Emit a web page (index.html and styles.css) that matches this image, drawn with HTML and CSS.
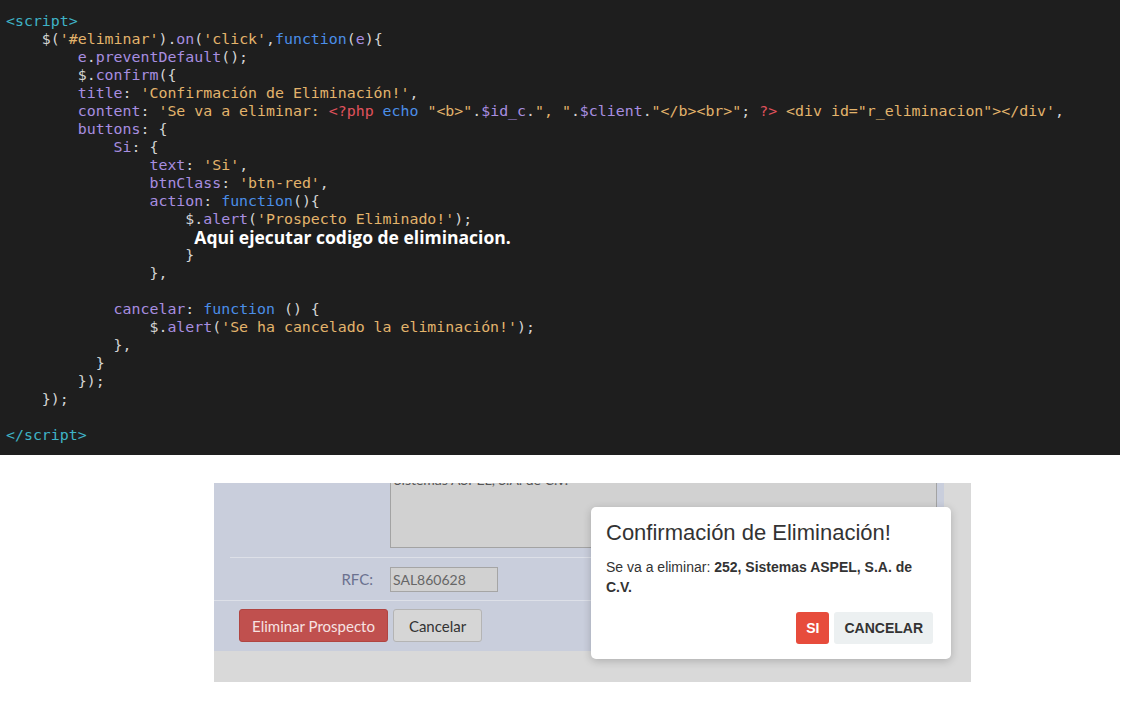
FILE: index.html
```html
<!DOCTYPE html>
<html lang="es">
<head>
  <meta charset="UTF-8">
  <title>Confirmar eliminación</title>
  <link rel="stylesheet" href="styles.css">
</head>
<body>
  <!-- Code snippet -->
  <div class="code">
<pre><span class="t">&lt;script&gt;</span>
    $(<span class="s">'#eliminar'</span>).<span class="p">on</span>(<span class="s">'click'</span>,<span class="k">function</span>(<span class="p">e</span>){
        <span class="p">e</span>.<span class="p">preventDefault</span>();
        $.<span class="p">confirm</span>({
        <span class="p">title</span>: <span class="s">'Confirmación de Eliminación!'</span>,
        <span class="p">content</span>: <span class="s">'Se va a eliminar: </span><span class="r">&lt;?php</span> <span class="k">echo</span> <span class="s">"&lt;b&gt;"</span>.<span class="p">$id_c</span>.<span class="s">", "</span>.<span class="p">$client</span>.<span class="s">"&lt;/b&gt;&lt;br&gt;"</span>; <span class="r">?&gt;</span> <span class="s">&lt;div id="r_eliminacion"&gt;&lt;/div'</span>,
        <span class="p">buttons</span>: {
            <span class="p">Si</span>: {
                <span class="p">text</span>: <span class="s">'Si'</span>,
                <span class="p">btnClass</span>: <span class="s">'btn-red'</span>,
                <span class="p">action</span>: <span class="k">function</span>(){
                    $.<span class="p">alert</span>(<span class="s">'Prospecto Eliminado!'</span>);
                    <span class="note">Aqui ejecutar codigo de eliminacion.</span>
                    }
                },

            <span class="p">cancelar</span>: <span class="k">function</span> () {
                $.<span class="p">alert</span>(<span class="s">'Se ha cancelado la eliminación!'</span>);
            },
          }
        });
    });

<span class="t">&lt;/script&gt;</span></pre>
  </div>

  <!-- Screenshot of the form with the dialog -->
  <div class="shot">
    <div class="form">
      <div class="text-row">
        <div class="textarea"><p>Sistemas ASPEL, S.A. de C.V.</p></div>
      </div>
      <div class="divider indent"></div>
      <div class="field-row">
        <label class="label">RFC:</label>
        <div class="input">SAL860628</div>
      </div>
      <div class="divider"></div>
      <div class="actions">
        <button class="btn btn-danger">Eliminar Prospecto</button>
        <button class="btn btn-default">Cancelar</button>
      </div>
    </div>

    <div class="dialog">
      <div class="dialog-title">Confirmación de Eliminación!</div>
      <div class="dialog-content">Se va a eliminar: <b>252, Sistemas ASPEL, S.A. de C.V.</b></div>
      <div class="dialog-buttons">
        <button class="dbtn dbtn-red">SI</button>
        <button class="dbtn dbtn-light">CANCELAR</button>
      </div>
    </div>
  </div>
</body>
</html>
```

FILE: styles.css
```css
/* General */
body {
  margin: 0;
  background: #fff;
}

/* Code panel */
.code {
  width: 1120px;
  height: 455px;
  box-sizing: border-box;
  padding: 12px 0 0 6px;
  background: #1e1e1e;
}

.code pre {
  margin: 0;
  font-family: "DejaVu Sans Mono", monospace;
  font-size: 14.9px;
  line-height: 18px;
  color: #d4d4d4;
}

.t { color: #3fb3c6; }
.s { color: #e3b46c; }
.p { color: #a88ee0; }
.k { color: #4b8ee8; }
.r { color: #e0525c; }

.note {
  display: inline-block;
  vertical-align: top;
  margin-left: 9px;
  font-family: "Open Sans", sans-serif;
  font-weight: 700;
  font-size: 17.5px;
  line-height: 18px;
  color: #fff;
}

/* Form screenshot */
.shot {
  position: relative;
  width: 757px;
  height: 199px;
  margin: 28px 0 0 214px;
  background: #d9d9d9;
}

.form {
  display: flex;
  flex-direction: column;
  width: 730px;
  height: 168px;
  background: #c9cedc;
  font-family: Lato, sans-serif;
}

.text-row {
  height: 74px;
  padding-left: 176px;
}

.textarea {
  width: 545px;
  height: 64px;
  border: 1px solid #a3a3a3;
  border-top: none;
  background: #d1d1d1;
  overflow: hidden;
}

.textarea p {
  margin: -11px 0 0 3px;
  font-size: 14px;
  line-height: 16px;
  color: #555;
}

.divider {
  border-top: 1px solid #dde0e8;
}

.divider.indent {
  margin-left: 16px;
}

.field-row {
  display: flex;
  align-items: center;
  height: 42px;
}

.label {
  width: 159px;
  text-align: right;
  font-size: 15px;
  color: #6b7190;
}

.input {
  width: 104px;
  height: 23px;
  margin-left: 17px;
  padding-left: 2px;
  border: 1px solid #a5a5a5;
  background: #d1d1d1;
  font-size: 14px;
  line-height: 23px;
  color: #666;
}

.actions {
  display: flex;
  gap: 5px;
  padding: 8px 0 0 25px;
}

.btn {
  height: 33px;
  padding: 0;
  border-radius: 3px;
  font-family: Lato, sans-serif;
  font-size: 15px;
}

.btn-danger {
  width: 149px;
  border: 1px solid #b04542;
  background: #c0504e;
  color: #f7e2e2;
}

.btn-default {
  width: 89px;
  border: 1px solid #b4b4b4;
  background: #d6d6d6;
  color: #333;
}

/* Confirm dialog over the form */
.dialog {
  position: absolute;
  left: 377px;
  top: 24px;
  width: 360px;
  height: 152px;
  box-sizing: border-box;
  padding: 14px 18px 0 15px;
  background: #fff;
  border-radius: 5px;
  box-shadow: 0 2px 8px rgba(0, 0, 0, 0.2);
  font-family: "Liberation Sans", Arial, sans-serif;
  color: #333;
}

.dialog-title {
  font-size: 22px;
  line-height: 24px;
}

.dialog-content {
  margin-top: 12px;
  font-size: 14px;
  line-height: 20px;
}

.dialog-buttons {
  display: flex;
  justify-content: flex-end;
  gap: 5px;
  margin-top: 15px;
}

.dbtn {
  height: 32px;
  padding: 0 10px;
  border: none;
  border-radius: 3px;
  font-family: "Liberation Sans", Arial, sans-serif;
  font-size: 14px;
  font-weight: 700;
}

.dbtn-red {
  background: #e74c3c;
  color: #fff;
}

.dbtn-light {
  background: #ecf0f1;
  color: #333;
}
```
